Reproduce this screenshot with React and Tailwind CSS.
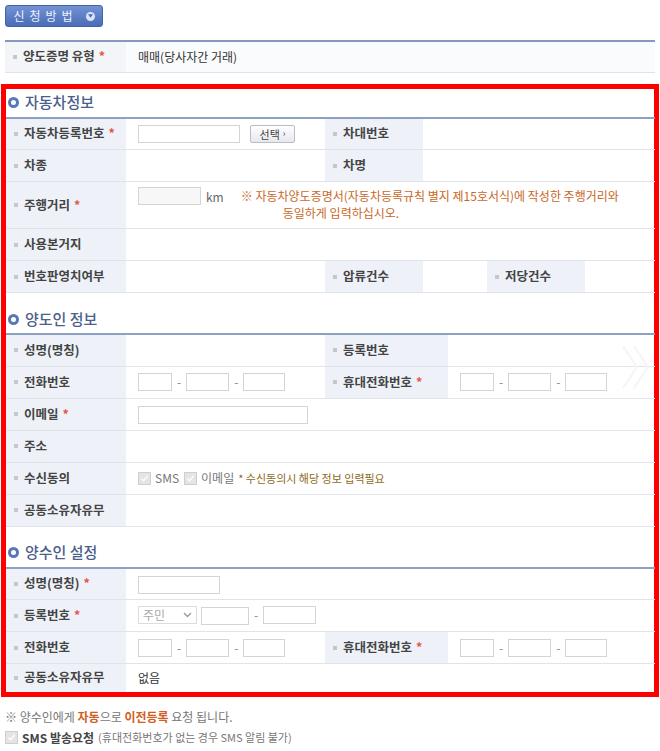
const font = { fontFamily: '"Noto Sans CJK KR", "Noto Sans", sans-serif' };

const Star = () => <span className="ml-1 text-[#e2574c]">*</span>;

const Label = ({ children, req, className = "" }) => (
  <td className={"h-[32px] bg-[#eef2f8] pl-[8px] align-middle border-b border-[#dfe3ea] " + className}>
    <div className="flex items-center text-[12.5px] font-bold text-[#444]">
      <span className="mr-[6px] inline-block h-[4px] w-[4px] bg-[#c4c8ce]" />
      {children}
      {req && <Star />}
    </div>
  </td>
);

const Value = ({ children, colSpan, className = "" }) => (
  <td colSpan={colSpan} className={"h-[32px] pl-[12px] align-middle border-b border-[#dfe3ea] text-[12px] text-[#333] " + className}>
    {children}
  </td>
);

const Box = ({ w, gray }) => (
  <span className={"inline-block h-[18px] border border-[#d4d4d4] align-middle " + (gray ? "bg-[#f7f7f7] " : "bg-white ") + w} />
);

const Dash = () => <span className="mx-[5px] align-middle text-[12px] text-[#888]">-</span>;

const Phone = () => (
  <div className="flex items-center">
    <Box w="w-[34px]" />
    <Dash />
    <Box w="w-[43px]" />
    <Dash />
    <Box w="w-[42px]" />
  </div>
);

const Check = () => (
  <span className="inline-flex h-[13px] w-[13px] items-center justify-center border border-[#cfcfcf] bg-[#e4e4e4]">
    <svg width="9" height="9" viewBox="0 0 10 10">
      <path d="M1.5 5.2 L4 7.6 L8.6 2" fill="none" stroke="#fafafa" strokeWidth="1.8" />
    </svg>
  </span>
);

const Section = ({ title }) => (
  <div className="flex h-[28px] items-center pl-[2px]">
    <span className="mr-[6px] inline-block h-[11px] w-[11px] rounded-full border-[3px] border-[#5878b4] bg-white" />
    <span className="text-[15px] font-medium text-[#4b5f8a]">{title}</span>
  </div>
);

export default function App() {
  return (
    <div className="relative w-[660px] bg-white pb-[10px]" style={font}>
      <div className="px-[5px] pt-[5px]">
        <button className="flex h-[22px] w-[98px] items-center justify-center gap-[8px] rounded-[3px] border border-[#4263a6] bg-gradient-to-b from-[#7393d4] to-[#4a6cb6] text-[12px] tracking-[5px] text-[#eef2ff]">
          <span>신청방법</span>
          <span className="flex h-[9px] w-[9px] items-center justify-center rounded-full bg-[#dbe4f6]">
            <svg width="5" height="4" viewBox="0 0 6 4"><path d="M0 0 L6 0 L3 4 Z" fill="#4a6cb6" /></svg>
          </span>
        </button>
      </div>

      <div className="mt-[13px] px-[5px]">
        <table className="w-full table-fixed border-collapse border-t-2 border-[#8399bf]">
          <colgroup>
            <col className="w-[121px]" />
            <col />
          </colgroup>
          <tbody>
            <tr>
              <Label req className="!h-[31px] !bg-[#f3f5f8]">양도증명 유형</Label>
              <Value className="!h-[31px] bg-[#fafbfc]">매매(당사자간 거래)</Value>
            </tr>
          </tbody>
        </table>
      </div>

      <div className="mx-[1px] mt-[11px] border-[5px] border-[#ff0000]">
        <Section title="자동차정보" />
        <table className="w-[649px] table-fixed border-collapse border-t-2 border-[#8da1c3]">
          <colgroup>
            <col className="w-[120px]" />
            <col className="w-[199px]" />
            <col className="w-[98px]" />
            <col className="w-[64px]" />
            <col className="w-[98px]" />
            <col />
          </colgroup>
          <tbody>
            <tr>
              <Label req>자동차등록번호</Label>
              <Value>
                <div className="flex items-center">
                  <Box w="w-[102px]" />
                  <span className="ml-[10px] flex h-[18px] w-[45px] items-center justify-center rounded-[2px] border border-[#b9bec6] bg-gradient-to-b from-white to-[#e6e8ec] text-[11px] text-[#444]">
                    선택 <span className="ml-[3px] text-[9px]">›</span>
                  </span>
                </div>
              </Value>
              <Label>차대번호</Label>
              <Value colSpan={3} />
            </tr>
            <tr>
              <Label>차종</Label>
              <Value />
              <Label>차명</Label>
              <Value colSpan={3} />
            </tr>
            <tr>
              <Label req className="!h-[47px]">주행거리</Label>
              <Value colSpan={5} className="!h-[47px] !align-top pt-[5px]">
                <div className="flex">
                  <Box w="w-[63px]" gray />
                  <span className="ml-[5px] mt-[1px] text-[12px] text-[#666]">km</span>
                  <div className="ml-[17px] text-[12px] leading-[17px] text-[#c8681f]">
                    <div>※ 자동차양도증명서(자동차등록규칙 별지 제15호서식)에 작성한 주행거리와</div>
                    <div className="pl-[42px]">동일하게 입력하십시오.</div>
                  </div>
                </div>
              </Value>
            </tr>
            <tr>
              <Label>사용본거지</Label>
              <Value colSpan={5} />
            </tr>
            <tr>
              <Label>번호판영치여부</Label>
              <Value />
              <Label>압류건수</Label>
              <Value />
              <Label>저당건수</Label>
              <Value />
            </tr>
          </tbody>
        </table>

        <div className="mt-[12px]">
          <Section title="양도인 정보" />
        </div>
        <table className="w-[649px] table-fixed border-collapse border-t-2 border-[#8da1c3]">
          <colgroup>
            <col className="w-[120px]" />
            <col className="w-[199px]" />
            <col className="w-[123px]" />
            <col />
          </colgroup>
          <tbody>
            <tr>
              <Label>성명(명칭)</Label>
              <Value />
              <Label>등록번호</Label>
              <Value />
            </tr>
            <tr>
              <Label>전화번호</Label>
              <Value><Phone /></Value>
              <Label req>휴대전화번호</Label>
              <Value><Phone /></Value>
            </tr>
            <tr>
              <Label req>이메일</Label>
              <Value colSpan={3}><Box w="w-[170px]" /></Value>
            </tr>
            <tr>
              <Label>주소</Label>
              <Value colSpan={3} />
            </tr>
            <tr>
              <Label>수신동의</Label>
              <Value colSpan={3}>
                <div className="flex items-center text-[12px] text-[#777]">
                  <Check />
                  <span className="ml-[4px]">SMS</span>
                  <span className="ml-[5px]"><Check /></span>
                  <span className="ml-[4px]">이메일</span>
                  <span className="ml-[4px] text-[11px] text-[#8c6a22]">* 수신동의시 해당 정보 입력필요</span>
                </div>
              </Value>
            </tr>
            <tr>
              <Label>공동소유자유무</Label>
              <Value colSpan={3} />
            </tr>
          </tbody>
        </table>

        <div className="mt-[12px]">
          <Section title="양수인 설정" />
        </div>
        <table className="w-[649px] table-fixed border-collapse border-t-2 border-[#8da1c3]">
          <colgroup>
            <col className="w-[120px]" />
            <col className="w-[199px]" />
            <col className="w-[123px]" />
            <col />
          </colgroup>
          <tbody>
            <tr>
              <Label req>성명(명칭)</Label>
              <Value colSpan={3}><Box w="w-[82px]" /></Value>
            </tr>
            <tr>
              <Label req>등록번호</Label>
              <Value colSpan={3}>
                <div className="flex items-center">
                  <span className="flex h-[18px] w-[59px] items-center justify-between border border-[#dcdcdc] bg-white px-[4px] text-[12px] text-[#aaa]">
                    주민
                    <svg width="9" height="6" viewBox="0 0 9 6"><path d="M1 1 L4.5 4.5 L8 1" fill="none" stroke="#999" strokeWidth="1.3" /></svg>
                  </span>
                  <span className="ml-[4px]"><Box w="w-[48px]" /></span>
                  <Dash />
                  <Box w="w-[53px]" />
                </div>
              </Value>
            </tr>
            <tr>
              <Label>전화번호</Label>
              <Value><Phone /></Value>
              <Label req>휴대전화번호</Label>
              <Value><Phone /></Value>
            </tr>
            <tr>
              <Label className="!border-b-0 !h-[28px]">공동소유자유무</Label>
              <Value colSpan={3} className="!border-b-0 !h-[28px]">없음</Value>
            </tr>
          </tbody>
        </table>
      </div>

      <div className="px-[5px] pt-[11px] text-[12px] text-[#777]">
        <div>
          ※ 양수인에게 <b className="text-[#d0601f]">자동</b>으로 <b className="text-[#d0601f]">이전등록</b> 요청 됩니다.
        </div>
        <div className="mt-[3px] flex items-center">
          <Check />
          <b className="ml-[4px] text-[#444]">SMS 발송요청</b>
          <span className="ml-[4px] text-[11px] text-[#777]">(휴대전화번호가 없는 경우 SMS 알림 불가)</span>
        </div>
      </div>

      <svg className="pointer-events-none absolute left-[620px] top-[344px]" width="32" height="46" viewBox="0 0 32 46">
        <path d="M3 2 L17 23 L3 44 M14 2 L28 23 L14 44" fill="none" stroke="#f5f5f5" strokeWidth="2" />
      </svg>
    </div>
  );
}
